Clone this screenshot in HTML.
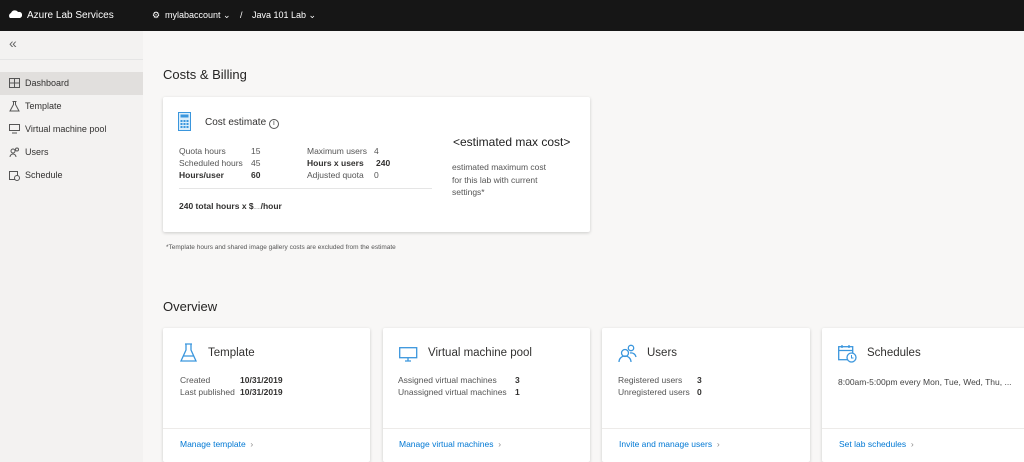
<!DOCTYPE html>
<html><head><meta charset="utf-8"><style>
*{margin:0;padding:0;box-sizing:border-box}
body{width:1024px;height:462px;overflow:hidden;font-family:"Liberation Sans",sans-serif;background:#f8f7f6;color:#323130;position:relative}
.top{position:absolute;left:0;top:0;width:1024px;height:31px;background:#161616;color:#fff;font-size:10px}
.top span{position:absolute;top:10px}
.side{position:absolute;left:0;top:31px;width:143px;height:431px;background:#f3f2f1}
.nav{position:absolute;left:0;width:143px;height:23px;font-size:9px;line-height:23px;padding-left:25px}
.nav svg{position:absolute;left:9px;top:6px}
.card{position:absolute;background:#fff;box-shadow:0 1px 3px rgba(0,0,0,.18);border-radius:2px}
.t{position:absolute;font-size:8.5px;white-space:nowrap}
b{font-weight:bold}
h2{position:absolute;font-size:13px;font-weight:normal;color:#252423}
.ct{position:absolute;font-size:11.5px;top:19px;left:45px;color:#323130}
.foot{position:absolute;left:0;right:0;top:100px;border-top:1px solid #edebe9}
.lnk{position:absolute;top:111px;left:17px;font-size:8.5px;color:#0078d4}
</style></head><body>
<div class="top">
<svg style="position:absolute;left:8px;top:9px" width="14" height="11" viewBox="0 0 14 11"><path d="M2 9a3 3 0 0 1 1-5 4 4 0 0 1 7-1 3 3 0 0 1 2 6z" fill="#fff"/></svg>
<span style="left:27px">Azure Lab Services</span>
<span style="left:152px;font-size:9px">⚙</span>
<span style="left:165px;font-size:9px">mylabaccount ⌄</span>
<span style="left:240px;font-size:9px">/</span>
<span style="left:252px;font-size:9px">Java 101 Lab ⌄</span>
</div>
<div class="side">
<div style="position:absolute;left:9px;top:4px;font-size:14px;color:#666">«</div>
<div style="position:absolute;left:0;top:28px;width:143px;border-top:1px solid #e5e5e5"></div>
<div class="nav" style="top:41px;background:#e1dfdd"><svg width="11" height="10"><rect x=".5" y=".5" width="10" height="9" fill="none" stroke="#555"/><path d="M.5 5h10M5.5.5v9" stroke="#555"/></svg>Dashboard</div>
<div class="nav" style="top:64px"><svg width="11" height="11"><path d="M3.5 .5h4M4.5.5v3L1 10h9L6.5 3.5V.5" fill="none" stroke="#555"/></svg>Template</div>
<div class="nav" style="top:87px"><svg width="11" height="10"><rect x=".5" y=".5" width="10" height="6" fill="none" stroke="#555"/><path d="M3 9h5" stroke="#555"/></svg>Virtual machine pool</div>
<div class="nav" style="top:110px"><svg width="11" height="10"><circle cx="4" cy="4" r="2" fill="none" stroke="#555"/><path d="M1 10a3 3 0 0 1 6 0" fill="none" stroke="#555"/><circle cx="8" cy="2.5" r="1.5" fill="none" stroke="#555"/></svg>Users</div>
<div class="nav" style="top:133px"><svg width="11" height="11"><rect x=".5" y="1.5" width="8" height="8" fill="none" stroke="#555"/><circle cx="8" cy="8" r="2.5" fill="#f3f2f1" stroke="#555"/></svg>Schedule</div>
</div>
<h2 style="left:163px;top:67px">Costs &amp; Billing</h2>
<div class="card" style="left:163px;top:97px;width:427px;height:135px">
<svg style="position:absolute;left:15px;top:15px" width="13" height="19"><rect x=".5" y=".5" width="12" height="18" fill="#dbeefb" stroke="#3a96dd"/><rect x="2.5" y="2.5" width="8" height="3" fill="#3a96dd"/><g fill="#3a96dd"><rect x="2.5" y="8" width="2" height="2"/><rect x="5.5" y="8" width="2" height="2"/><rect x="8.5" y="8" width="2" height="2"/><rect x="2.5" y="11" width="2" height="2"/><rect x="5.5" y="11" width="2" height="2"/><rect x="8.5" y="11" width="2" height="2"/><rect x="2.5" y="14" width="2" height="2"/><rect x="5.5" y="14" width="2" height="2"/><rect x="8.5" y="14" width="2" height="2"/></g></svg>
<div class="t" style="left:42px;top:20px;font-size:10px">Cost estimate <span style="display:inline-block;width:10px;height:10px;border:1px solid #555;border-radius:50%;font-size:7px;text-align:center;line-height:8px">i</span></div>
<div class="t" style="left:16px;top:49px;color:#555">Quota hours</div><div class="t" style="left:88px;top:49px;color:#555">15</div>
<div class="t" style="left:16px;top:61px;color:#555">Scheduled hours</div><div class="t" style="left:88px;top:61px;color:#555">45</div>
<div class="t" style="left:16px;top:73px"><b>Hours/user</b></div><div class="t" style="left:88px;top:73px"><b>60</b></div>
<div class="t" style="left:144px;top:49px;color:#555">Maximum users</div><div class="t" style="left:211px;top:49px;color:#555">4</div>
<div class="t" style="left:144px;top:61px"><b>Hours x users</b></div><div class="t" style="left:213px;top:61px"><b>240</b></div>
<div class="t" style="left:144px;top:73px;color:#555">Adjusted quota</div><div class="t" style="left:211px;top:73px;color:#555">0</div>
<div style="position:absolute;left:16px;top:91px;width:253px;border-top:1px solid #e5e5e5"></div>
<div class="t" style="left:16px;top:104px"><b>240 total hours x $<span style="color:#aaa;font-size:5px">.....</span>/hour</b></div>
<div class="t" style="left:290px;top:38px;font-size:12px;color:#222">&lt;estimated max cost&gt;</div>
<div class="t" style="left:289px;top:64px;color:#555;line-height:12.5px">estimated maximum cost<br>for this lab with current<br>settings*</div>
</div>
<div class="t" style="left:166px;top:244px;font-size:6.5px;color:#555">*Template hours and shared image gallery costs are excluded from the estimate</div>
<h2 style="left:163px;top:299px">Overview</h2>

<div class="card" style="left:163px;top:328px;width:207px;height:134px">
<svg style="position:absolute;left:17px;top:15px" width="17" height="20"><path d="M5 1h7M6 1v6L1 18h15L11 7V1M3 13h11" fill="none" stroke="#3a96dd" stroke-width="1.3"/></svg>
<div class="ct">Template</div>
<div class="t" style="left:17px;top:47px;color:#555">Created</div><div class="t" style="left:77px;top:47px"><b>10/31/2019</b></div>
<div class="t" style="left:17px;top:59px;color:#555">Last published</div><div class="t" style="left:77px;top:59px"><b>10/31/2019</b></div>
<div class="foot"></div><div class="lnk">Manage template &nbsp;<span style="color:#888">›</span></div></div>

<div class="card" style="left:383px;top:328px;width:207px;height:134px">
<svg style="position:absolute;left:16px;top:19px" width="19" height="15"><rect x=".7" y=".7" width="17" height="10" fill="none" stroke="#3a96dd" stroke-width="1.3"/><path d="M9 11v3M6 14h6" stroke="#3a96dd" stroke-width="1.3"/></svg>
<div class="ct">Virtual machine pool</div>
<div class="t" style="left:15px;top:47px;color:#555">Assigned virtual machines</div><div class="t" style="left:132px;top:47px"><b>3</b></div>
<div class="t" style="left:15px;top:59px;color:#555">Unassigned virtual machines</div><div class="t" style="left:132px;top:59px"><b>1</b></div>
<div class="foot"></div><div class="lnk" style="left:16px">Manage virtual machines &nbsp;<span style="color:#888">›</span></div></div>

<div class="card" style="left:602px;top:328px;width:208px;height:134px">
<svg style="position:absolute;left:16px;top:16px" width="19" height="19"><circle cx="7" cy="9" r="3.5" fill="none" stroke="#3a96dd" stroke-width="1.3"/><path d="M1 18a6 6 0 0 1 12 0" fill="none" stroke="#3a96dd" stroke-width="1.3"/><circle cx="13" cy="4" r="2.7" fill="none" stroke="#3a96dd" stroke-width="1.3"/><path d="M12 9a5 5 0 0 1 6 4" fill="none" stroke="#3a96dd" stroke-width="1.3"/></svg>
<div class="ct">Users</div>
<div class="t" style="left:16px;top:47px;color:#555">Registered users</div><div class="t" style="left:95px;top:47px"><b>3</b></div>
<div class="t" style="left:16px;top:59px;color:#555">Unregistered users</div><div class="t" style="left:95px;top:59px"><b>0</b></div>
<div class="foot"></div><div class="lnk">Invite and manage users &nbsp;<span style="color:#888">›</span></div></div>

<div class="card" style="left:822px;top:328px;width:210px;height:134px">
<svg style="position:absolute;left:16px;top:16px" width="19" height="19"><rect x=".7" y="2.7" width="14" height="13" fill="none" stroke="#3a96dd" stroke-width="1.3"/><path d="M.7 6.5h14M4 1v3M11 1v3" stroke="#3a96dd" stroke-width="1.3"/><circle cx="13.5" cy="13.5" r="4.5" fill="#fff" stroke="#3a96dd" stroke-width="1.3"/><path d="M13.5 11v3h2" fill="none" stroke="#3a96dd"/></svg>
<div class="ct">Schedules</div>
<div class="t" style="left:16px;top:49px;color:#444">8:00am-5:00pm every Mon, Tue, Wed, Thu, ...</div>
<div class="foot"></div><div class="lnk">Set lab schedules &nbsp;<span style="color:#888">›</span></div></div>
</body></html>
